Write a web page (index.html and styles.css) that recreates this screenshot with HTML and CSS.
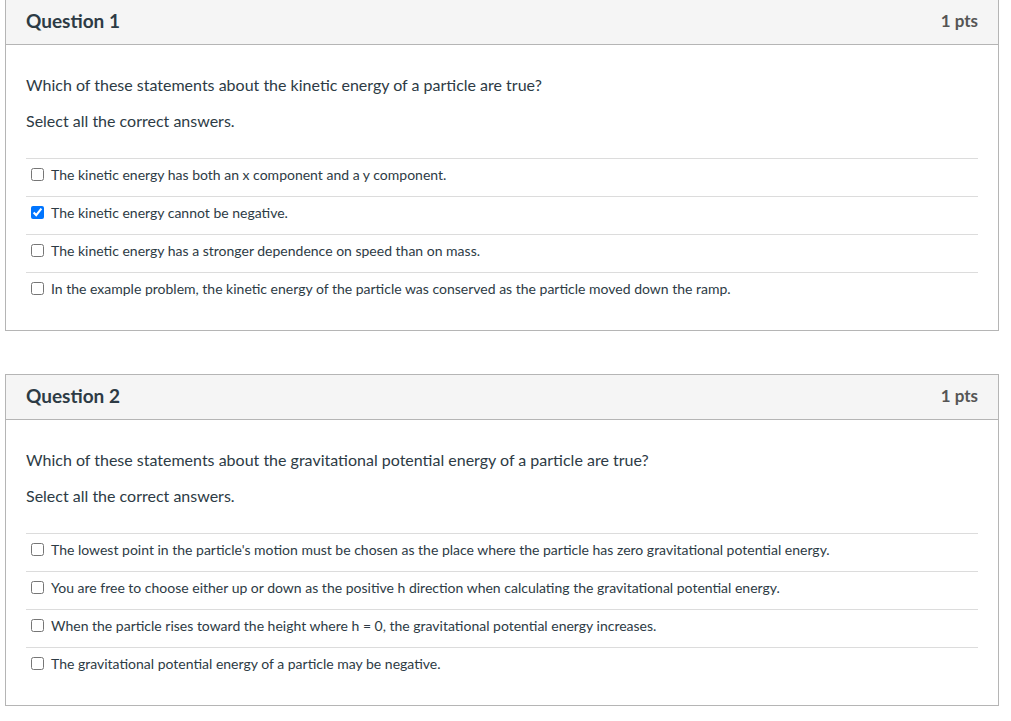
FILE: index.html
```html
<!DOCTYPE html>
<html>
<head>
<meta charset="utf-8">
<link rel="stylesheet" href="styles.css">
</head>
<body>
<div class="page">
  <section class="question">
    <header class="q-header">
      <h2 class="q-title">Question 1</h2>
      <span class="q-points">1 pts</span>
    </header>
    <div class="q-body">
      <p class="q-text">Which of these statements about the kinetic energy of a particle are true?</p>
      <p class="q-text">Select all the correct answers.</p>
      <ul class="answers">
        <li class="answer"><input type="checkbox" class="cb"><span>The kinetic energy has both an x component and a y component.</span></li>
        <li class="answer"><input type="checkbox" class="cb" checked><span>The kinetic energy cannot be negative.</span></li>
        <li class="answer"><input type="checkbox" class="cb"><span>The kinetic energy has a stronger dependence on speed than on mass.</span></li>
        <li class="answer"><input type="checkbox" class="cb"><span>In the example problem, the kinetic energy of the particle was conserved as the particle moved down the ramp.</span></li>
      </ul>
    </div>
  </section>
  <section class="question">
    <header class="q-header">
      <h2 class="q-title">Question 2</h2>
      <span class="q-points">1 pts</span>
    </header>
    <div class="q-body">
      <p class="q-text">Which of these statements about the gravitational potential energy of a particle are true?</p>
      <p class="q-text">Select all the correct answers.</p>
      <ul class="answers">
        <li class="answer"><input type="checkbox" class="cb"><span>The lowest point in the particle's motion must be chosen as the place where the particle has zero gravitational potential energy.</span></li>
        <li class="answer"><input type="checkbox" class="cb"><span>You are free to choose either up or down as the positive h direction when calculating the gravitational potential energy.</span></li>
        <li class="answer"><input type="checkbox" class="cb"><span>When the particle rises toward the height where h = 0, the gravitational potential energy increases.</span></li>
        <li class="answer"><input type="checkbox" class="cb"><span>The gravitational potential energy of a particle may be negative.</span></li>
      </ul>
    </div>
  </section>
</div>
</body>
</html>
```
FILE: styles.css
```css
* { box-sizing: border-box; }
html, body { margin: 0; padding: 0; background: #fff; }
body {
  font-family: Lato, "Open Sans", sans-serif;
  color: #2d3b45;
}
.page {
  margin-top: -1px;
  padding-left: 5px;
  width: 999px;
  display: flex;
  flex-direction: column;
  gap: 43px;
}
.question {
  border: 1px solid #b5b5b5;
  background: #fff;
}
.q-header {
  height: 45px;
  background: #f5f5f5;
  border-bottom: 1px solid #b5b5b5;
  display: flex;
  align-items: center;
  justify-content: space-between;
  padding: 0 20px 3px;
}
.q-title {
  margin: 0;
  font-size: 19px;
  font-weight: 700;
  color: #2d3b45;
}
.q-points {
  font-size: 17px;
  font-weight: 700;
  color: #555;
}
.q-body {
  padding: 30px 20px 20px;
}
.q-text {
  margin: 0 0 16px;
  font-size: 16px;
  line-height: 20px;
}
.answers {
  list-style: none;
  margin: 27px 0 0;
  padding: 0;
}
.answer {
  border-top: 1px solid #dcdcdc;
  height: 38px;
  display: flex;
  align-items: center;
  padding-bottom: 6px;
  font-size: 14px;
}
.cb {
  margin: 0 7px 0 5px;
  width: 13px;
  height: 13px;
}
```
